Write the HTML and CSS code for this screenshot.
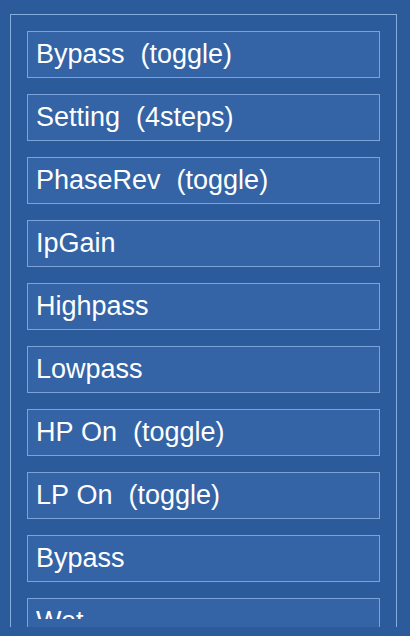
FILE: index.html
```html
<!DOCTYPE html>
<html>
<head>
<meta charset="utf-8">
<link rel="stylesheet" href="styles.css">
</head>
<body>
<div class="panel">
  <div class="list">
    <div class="item">Bypass  (toggle)</div>
    <div class="item">Setting  (4steps)</div>
    <div class="item">PhaseRev  (toggle)</div>
    <div class="item">IpGain</div>
    <div class="item">Highpass</div>
    <div class="item">Lowpass</div>
    <div class="item">HP On  (toggle)</div>
    <div class="item">LP On  (toggle)</div>
    <div class="item">Bypass</div>
    <div class="item"><span class="cut">Wet</span></div>
  </div>
</div>
</body>
</html>
```
FILE: styles.css
```css
html, body {
  margin: 0;
  padding: 0;
  background: #2c5b9c;
  height: 636px;
  overflow: hidden;
}
.panel {
  margin: 14px 0 0 10px;
  width: 385px;
  height: 612px;
  border: 1px solid #86addf;
  border-bottom: 0;
  overflow: hidden;
  background: #2c5b9c;
}
.list {
  display: flex;
  flex-direction: column;
  gap: 16px;
  padding: 16px 16px 0 16px;
}
.item {
  height: 43px;
  padding: 1px 0 1px 8px;
  line-height: 43px;
  border: 1px solid #7aa3da;
  background: #3464a6;
  color: #ffffff;
  font-family: "Liberation Sans", Arial, sans-serif;
  font-size: 27px;
  word-spacing: 0.5px;
  white-space: pre;
  flex: none;
}
.cut {
  display: block;
  height: 19px;
  overflow: hidden;
}
```
